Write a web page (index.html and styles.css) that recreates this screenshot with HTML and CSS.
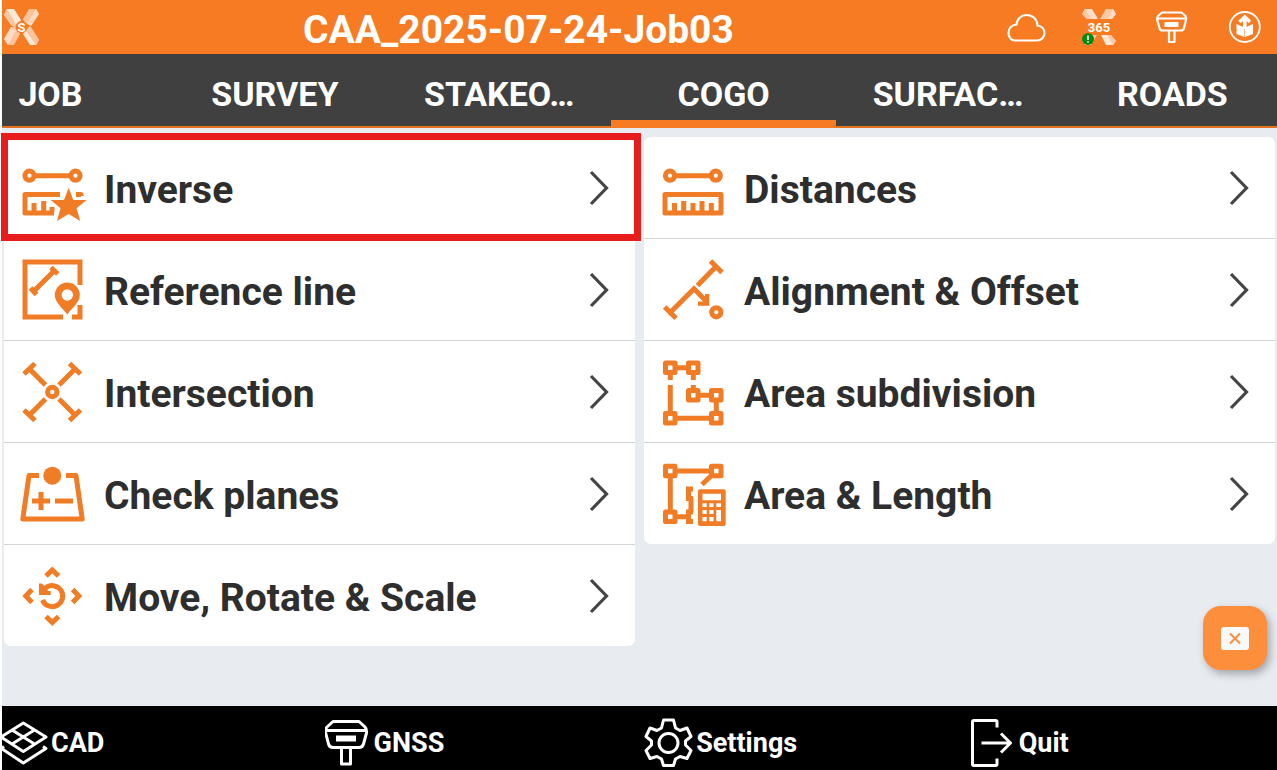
FILE: index.html
```html
<!DOCTYPE html>
<html lang="en">
<head>
<meta charset="utf-8">
<meta name="viewport" content="width=device-width, initial-scale=1">
<title>CAA_2025-07-24-Job03</title>
<link rel="stylesheet" href="styles.css">
</head>
<body>
<svg class="defs" aria-hidden="true">
  <symbol id="chevron" viewBox="0 0 20 36"><path d="M2 2 17.500 18 2 34" fill="none" stroke="#444" stroke-width="3.200"/></symbol>
  <symbol id="receiver" viewBox="0 0 46 48"><path d="M8 2.500H34L40 8Q42 10 41.500 14L38.500 25Q37.500 28.500 34 28.500H8Q4.500 28.500 3.500 25L.7 14Q0 10 2 8ZM1 11.500H41M16.500 29V45H25.500V29" fill="none" stroke="#fff" stroke-width="3" stroke-linejoin="round"/><path d="M11 16.500H31V22.500H11Z" fill="#fff"/></symbol>
</svg>
<div class="app">
  <header class="bar">
    <button class="icon-btn" aria-label="Main menu">
      <svg class="logo" viewBox="0 0 36 36" aria-hidden="true">
        <path d="M3 0H10L17 11 14 20 7 16 0 6Z" fill="#ffe9da"/><path d="M0 6 3 0 7 7 14 20 10 18Z" fill="#fbc49a"/>
        <path d="M25 0H32L35 5 27 17 21 14 19 10Z" fill="#fcc39a"/><path d="M32 0 35 5 27 17 23 14Z" fill="#ffd9bd"/>
        <path d="M12 18 16 25 10 36H4L0 30 7 18Z" fill="#fcc49d"/><path d="M7 18 12 22 4 36 0 30Z" fill="#ffdcc3"/>
        <path d="M26 17 35 31 32 36H26L19 25Z" fill="#ffe6d5"/><path d="M27 18 35 31 32 36 22 22Z" fill="#fdc59f"/>
        <circle cx="17.500" cy="18" r="6" fill="#f67b24"/>
        <text x="17.500" y="23" class="logo-text">S</text>
      </svg>
    </button>
    <h1 class="title">CAA_2025-07-24-Job03</h1>
    <div class="status">
      <button class="icon-btn" aria-label="Cloud"><svg class="status-icon" viewBox="0 0 40 40" aria-hidden="true"><path d="M9 33.500H31C35.500 33.500 38.500 30 38.500 26 38.500 22 35.500 19 31.500 18.500 31 12 26.500 8 20.500 8 15 8 11 12 10.500 17.500 5.500 18 2.500 21.500 2.500 26 2.500 30 5 33.500 9 33.500Z" fill="none" stroke="#fff" stroke-width="2.200"/></svg></button>
      <button class="icon-btn" aria-label="X-PAD 365"><svg class="status-icon" viewBox="0 0 40 40" aria-hidden="true">
        <path d="M6 2H13L19 12H8L3 7Z" fill="#ffdfca"/><path d="M3 7 6 2 12 12H8Z" fill="#fcc6a0"/>
        <path d="M27 2H34L37 7 33 12H21Z" fill="#fcc9a5"/><path d="M34 2 37 7 33 12H29Z" fill="#ffdcc5"/>
        <path d="M10 28H18L12 38H6L3 33Z" fill="#fdc39b"/>
        <path d="M22 28H32L37 34 34 38H27Z" fill="#ffe8d9"/><path d="M28 28H32L37 34 34 38Z" fill="#fdc8a3"/>
        <text x="20" y="25" class="logo-text">365</text>
        <circle cx="9" cy="32" r="6" fill="#0a8a12"/><path d="M9 28.500V33M9 34.300V35.700" stroke="#fff" stroke-width="1.500"/></svg></button>
      <button class="icon-btn" aria-label="Receiver"><svg class="status-icon" viewBox="0 0 40 40" aria-hidden="true"><path d="M10 5.500H29.500L33.500 9Q34.500 10.500 34 13L32 21Q31.500 23.500 29 23.500H10.500Q8 23.500 7.500 21L5.200 13Q5 10 6 9ZM5.500 11.500H34M17 24V35H22.500V24" fill="none" stroke="#fff" stroke-width="2.200" stroke-linejoin="round"/><path d="M12.500 15H26.500V20H12.500Z" fill="#fff"/></svg></button>
      <button class="icon-btn" aria-label="Share"><svg class="status-icon" viewBox="0 0 40 40" aria-hidden="true"><circle cx="19.800" cy="20" r="15" fill="none" stroke="#fff" stroke-width="1.800"/><path d="M11.500 17 19.500 20.500V30L11.500 27ZM28 17 20 20.500V30L28 27Z" fill="#fff"/><path d="M19.800 22V11M14.500 15 19.800 10 25 15" fill="none" stroke="#fff" stroke-width="3.600"/></svg></button>
    </div>
  </header>

  <nav class="tabs" aria-label="Sections">
    <a class="tab" href="#job">JOB</a>
    <a class="tab" href="#survey">SURVEY</a>
    <a class="tab" href="#stakeout">STAKEO…</a>
    <a class="tab tab-active" href="#cogo" aria-current="page">COGO</a>
    <a class="tab" href="#surfaces">SURFAC…</a>
    <a class="tab" href="#roads">ROADS</a>
  </nav>

  <main class="content">
    <ul class="card">
      <li class="item item-marked"><a class="row" href="#inverse">
        <svg class="row-icon" viewBox="0 0 68 68" aria-hidden="true"><g class="ln"><circle cx="9.500" cy="21.700" r="4.600"/><circle cx="55.500" cy="21.700" r="4.600"/><path stroke-linejoin="round" d="M14 21.700H51M40 40.500H5V59H34M56 40.500H61V42"/><path d="M14 49V58M23.700 47V58M32 53V58"/></g><path class="star-gap" d="M48.700 33.700 53.300 46H66.700L56.500 54.300 60.300 67 48.700 60 37 67 40.500 54.300 30.700 46H44Z"/></svg>
        <span class="label">Inverse</span><svg class="chev" aria-hidden="true"><use href="#chevron"/></svg></a></li>
      <li class="item"><a class="row" href="#reference-line">
        <svg class="row-icon" viewBox="0 0 68 68" aria-hidden="true"><g class="ln"><path d="M60 29V6H5V61H43M52 61H60V49"/><path d="M34 15 14 35M31 11.500 37.800 18M10.500 32 16.500 38.500"/></g><path class="fl" fill-rule="evenodd" d="M47.300 26.500A12.500 12.500 0 0 1 59.800 39C59.800 46 53 51 47.300 58.500 41.500 51 34.800 46 34.800 39A12.500 12.500 0 0 1 47.300 26.500ZM47.300 33.300A5.700 5.700 0 1 0 47.300 44.700 5.700 5.700 0 1 0 47.300 33.300Z"/></svg>
        <span class="label">Reference line</span><svg class="chev" aria-hidden="true"><use href="#chevron"/></svg></a></li>
      <li class="item"><a class="row" href="#intersection">
        <svg class="row-icon" viewBox="0 0 68 68" aria-hidden="true"><g class="ln"><circle cx="32.300" cy="34" r="4.700"/><path d="M25.500 27 9.500 11M4 16 15 5.500M39 27 55 11M49.500 5.500 60.500 16M25.500 41 9.500 57M4 52 15 62.500M39 41 55 57M60.500 52 49.500 62.500"/></g></svg>
        <span class="label">Intersection</span><svg class="chev" aria-hidden="true"><use href="#chevron"/></svg></a></li>
      <li class="item"><a class="row" href="#check-planes">
        <svg class="row-icon" viewBox="0 0 68 68" aria-hidden="true"><g class="ln"><path stroke-linejoin="round" d="M19 15.500H9L2.800 59H62.200L56 15.500H46M12 41H30M21 32V50M35 41H53"/></g><circle class="fl" cx="32.300" cy="15.700" r="9"/></svg>
        <span class="label">Check planes</span><svg class="chev" aria-hidden="true"><use href="#chevron"/></svg></a></li>
      <li class="item"><a class="row" href="#move-rotate-scale">
        <svg class="row-icon" viewBox="0 0 68 68" aria-hidden="true"><g class="ln"><path d="M26 14 32.300 8 38.600 14M26 54.500 32.300 60.500 38.600 54.500M12 27.500 5.800 34 12 40.500M52.600 27.500 58.800 34 52.600 40.500M22.500 38A10.500 10.500 0 1 0 25 26.500"/></g><path class="fl" d="M19 21.500H22L26 25.500 28 29H30.700V33H19Z"/></svg>
        <span class="label">Move, Rotate &amp; Scale</span><svg class="chev" aria-hidden="true"><use href="#chevron"/></svg></a></li>
    </ul>

    <ul class="card">
      <li class="item"><a class="row" href="#distances">
        <svg class="row-icon" viewBox="0 0 68 68" aria-hidden="true"><g class="ln"><circle cx="10" cy="21.700" r="4.600"/><circle cx="55.800" cy="21.700" r="4.600"/><path stroke-linejoin="round" d="M15 21.700H51.500M5 40.500H61V59H5ZM14.500 49V58M23.700 47V58M33 49V58M42 47V58M51.300 49V58"/></g></svg>
        <span class="label">Distances</span><svg class="chev" aria-hidden="true"><use href="#chevron"/></svg></a></li>
      <li class="item"><a class="row" href="#alignment-offset">
        <svg class="row-icon" viewBox="0 0 68 68" aria-hidden="true"><g class="ln"><path d="M50.500 5 62 16.500M56 10.500 37.500 29.500M4.700 51 16 62.300M10 56.700 34 32.700 45 44"/><circle cx="56.300" cy="56.300" r="4.600"/></g><path class="fl" d="M45 38H49.300V49.700H38V45.500H43L45 43.500Z"/></svg>
        <span class="label">Alignment &amp; Offset</span><svg class="chev" aria-hidden="true"><use href="#chevron"/></svg></a></li>
      <li class="item"><a class="row" href="#area-subdivision">
        <svg class="row-icon" viewBox="0 0 68 68" aria-hidden="true"><g class="ln"><path stroke-linejoin="round" d="M5.500 5H15V14.500H5.500ZM28.500 5H38V14.500H28.500ZM28.500 32.500H38V42H28.500ZM51.500 32.500H61V42H51.500ZM5.500 55.500H15V65H5.500ZM51.500 55.500H61V65H51.500Z"/><path d="M15 9.700H28.500M10.300 15V22M33.300 15V22M33.300 27V32M38 37.200H51.500M56.300 42V55.500M10.300 27V55.500M15 60.300H51.500"/></g></svg>
        <span class="label">Area subdivision</span><svg class="chev" aria-hidden="true"><use href="#chevron"/></svg></a></li>
      <li class="item"><a class="row" href="#area-length">
        <svg class="row-icon" viewBox="0 0 68 68" aria-hidden="true"><g class="ln"><path stroke-linejoin="round" d="M5.500 6.300H15V15.800H5.500ZM51.500 6.300H61V15.800H51.500ZM5.500 52H15V61.500H5.500Z"/><path d="M15 11H51.500M10.300 16V52M15 56.700H28M52.500 14.500 42 24.500M33 29H28.500V38.500H33M33 52H28.500V61.500H33M31 38V52"/></g><path class="fl" fill-rule="evenodd" d="M40 29.300H64Q65.700 29.300 65.700 31V64Q65.700 66 64 66H40Q38 66 38 64V31Q38 29.300 40 29.300ZM42.500 33.700V40.300H61V33.700ZM42.500 43.200V47H46.700V43.200ZM49.300 43.200V47H53.500V43.200ZM56.300 43.200V47H61V43.200ZM42.500 50V54H46.700V50ZM49.300 50V54H53.500V50ZM42.500 57V61.200H46.700V57ZM49.300 57V61.200H53.500V57ZM56.300 50V61.200H61V50Z"/></svg>
        <span class="label">Area &amp; Length</span><svg class="chev" aria-hidden="true"><use href="#chevron"/></svg></a></li>
    </ul>

    <button class="fab" aria-label="Close panel"><svg class="fab-icon" viewBox="0 0 28 23" aria-hidden="true"><rect width="28" height="23" rx="3" fill="#f8f9fb"/><path d="M9 6.500 19 16.500M19 6.500 9 16.500" stroke="#fd8f3c" stroke-width="2"/></svg></button>
  </main>

  <footer class="dock">
    <a class="dock-item" href="#cad"><svg class="dock-icon" viewBox="0 0 46 48" aria-hidden="true"><g fill="none" stroke="#fff" stroke-width="3" stroke-linejoin="round"><path d="M21.300 4 44 18 21.300 32.500-1 18ZM10 11 32.500 25M32.500 11 10 25M2 27.500-.5 29.500 21.300 44 44 29.500 41 27.500"/></g></svg>CAD</a>
    <a class="dock-item" href="#gnss"><svg class="dock-icon" aria-hidden="true"><use href="#receiver"/></svg>GNSS</a>
    <a class="dock-item" href="#settings"><svg class="dock-icon" viewBox="0 0 46 48" aria-hidden="true"><g fill="none" stroke="#fff" stroke-width="3" stroke-linejoin="round"><path d="M16.500 1H26.500L28.500 9 33 11.500 40 9 44 17.500 38.500 22V26L44 31.500 40 39.500 33 37.500 28.500 40 26.500 46.500H16.500L14.500 40 10 37.500 3 39.500-1 31.500 4.500 26V22L-1 17.500 3 9 10 11.500 14.500 9Z"/><circle cx="21.500" cy="24" r="9.500"/></g></svg>Settings</a>
    <a class="dock-item" href="#quit"><svg class="dock-icon" viewBox="0 0 46 48" aria-hidden="true"><g fill="none" stroke="#fff" stroke-width="3" stroke-linejoin="round"><path d="M27 8.500V3Q27 1.500 25.500 1.500H4Q2.500 1.500 2.500 3V45Q2.500 46.500 4 46.500H25.500Q27 46.500 27 45V39.500M11.500 24H40M31 14.500 40.500 24 31 33.500"/></g></svg>Quit</a>
  </footer>
</div>
</body>
</html>
```
FILE: styles.css
```css
* { box-sizing: border-box; }

body {
  margin: 0;
  background: #fff;
  font-family: Roboto, "Liberation Sans", sans-serif;
  font-weight: 700;
}

a { color: inherit; text-decoration: none; }

button {
  padding: 0;
  border: 0;
  background: none;
  font: inherit;
  cursor: pointer;
}

svg { display: block; overflow: visible; flex: none; }

.defs { position: absolute; width: 0; height: 0; }

.app {
  display: flex;
  flex-direction: column;
  min-height: 100vh;
  padding-left: 2px;
  overflow: hidden;
}

/* Title bar */
.bar {
  display: grid;
  grid-template-columns: 299px 1fr auto;
  align-items: center;
  height: 54px;
  padding: 0 12px 0 2px;
  background: #f67b22;
  color: #fff;
}

.title {
  margin: 0;
  padding-top: 6px;
  font-size: 39px;
  line-height: 44px;
  white-space: nowrap;
}

.status { display: flex; gap: 33px; }
.logo { width: 36px; height: 36px; }
.status-icon { width: 40px; height: 40px; }
.logo-text { fill: #fff; font-size: 13px; text-anchor: middle; }

/* Section tabs: the strip is scrolled a little to the left */
.tabs {
  display: flex;
  height: 74px;
  overflow: hidden;
  background: #404040;
  color: #fff;
}

.tab {
  flex: 0 0 17.6%;
  padding-top: 18px;
  border-bottom: 2px solid #e3731f;
  font-size: 34px;
  line-height: 44px;
  text-align: center;
}

.tab:first-child { margin-left: -5%; }
.tab-active { border-bottom: 8px solid #f67b22; }

/* Command lists */
.content {
  position: relative;
  display: grid;
  grid-template-columns: 1fr 1fr;
  align-items: start;
  gap: 9px;
  flex: 1;
  padding: 9px 2px 16px 2px;
  background: #e8ebf0;
}

.card {
  margin: 0;
  padding: 0;
  list-style: none;
  border-radius: 7px;
  background: #fff;
}

.item { position: relative; }
.item + .item { border-top: 1px solid #d2d4d6; }

.item-marked::after {
  content: "";
  position: absolute;
  inset: -4px -6px -3px -3px;
  z-index: 1;
  border: 7px solid #e71c1c;
  pointer-events: none;
}

.row {
  display: flex;
  align-items: center;
  height: 101px;
  padding: 0 26px 0 16px;
  color: #2e2e2e;
}

.row-icon { width: 68px; height: 68px; }
.ln { fill: none; stroke: #f17c26; stroke-width: 5; }
.fl { fill: #f17c26; }
.star-gap { fill: #f17c26; stroke: #fff; stroke-width: 4; paint-order: stroke; }

.label {
  flex: 1;
  padding: 4px 0 0 16px;
  font-size: 39px;
  line-height: 44px;
  white-space: nowrap;
}

.chev { width: 20px; height: 36px; }

.fab {
  position: absolute;
  right: 10px;
  bottom: 36px;
  display: grid;
  place-items: center;
  width: 64px;
  height: 64px;
  border-radius: 18px;
  background: #fd8f3c;
  box-shadow: 3px 4px 8px rgba(0, 0, 0, 0.3);
}

.fab-icon { width: 28px; height: 23px; }

/* Bottom bar */
.dock {
  display: flex;
  height: 64px;
  padding-top: 10px;
  background: #000;
  color: #fff;
}

.dock-item {
  display: flex;
  align-items: center;
  gap: 3px;
  flex: 0 0 25.3%;
  font-size: 27px;
  line-height: 32px;
}

.dock-icon { width: 46px; height: 48px; }
```
